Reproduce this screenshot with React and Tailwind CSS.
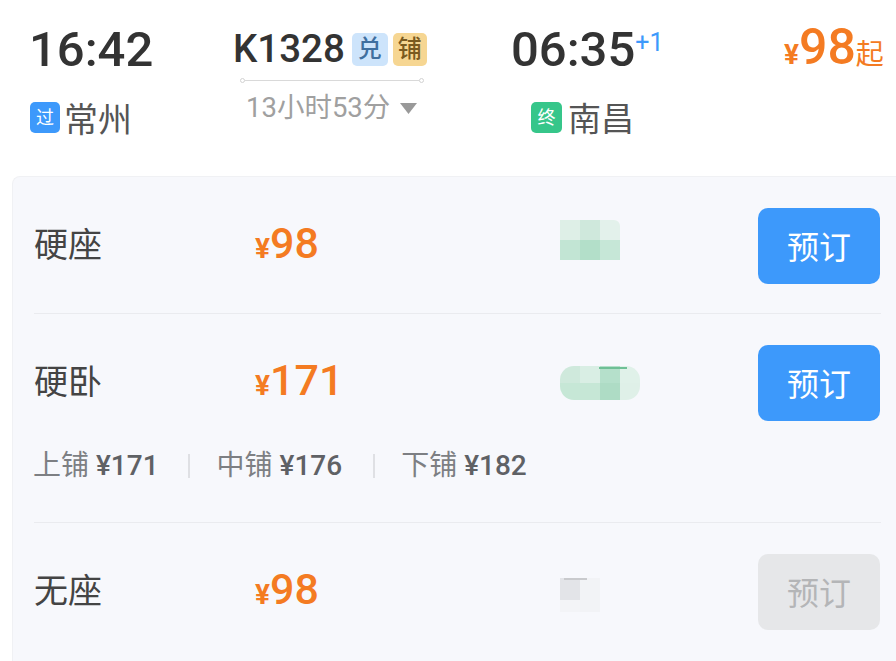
const font = { fontFamily: 'Roboto, "Noto Sans CJK SC", sans-serif' };

function Mosaic({ cells, className, line }) {
  return (
    <div className="relative w-fit">
      <div className={`grid w-fit overflow-hidden ${className}`}>
        {cells.map((c, i) => (
          <div key={i} className="h-5 w-5" style={{ background: c }} />
        ))}
      </div>
      {line}
    </div>
  );
}

function BookButton({ disabled }) {
  return (
    <button
      className={
        disabled
          ? 'mr-[1px] flex h-[76px] w-[122px] items-center justify-center rounded-[10px] bg-[#e6e7e9] pt-[3px] text-[32px] text-[#b4b5b7]'
          : 'mr-[1px] flex h-[76px] w-[122px] items-center justify-center rounded-[10px] bg-[#3d99fb] pt-[3px] text-[32px] text-white'
      }
    >
      预订
    </button>
  );
}

function Price({ value }) {
  return (
    <div className="flex w-[305px] items-baseline font-medium text-[#f47b22]">
      <span className="text-[28px] font-bold">¥</span>
      <span className="text-[43px] leading-none">{value}</span>
    </div>
  );
}

function SeatRow({ name, price, mosaic, mosaicClass, line, disabled }) {
  return (
    <div className="flex items-start">
      <div className="flex h-[76px] w-[221px] items-center pb-[3px] text-[34px] leading-none text-[#444444]">{name}</div>
      <div className="flex h-[76px] items-center">
        <Price value={price} />
      </div>
      <div className="flex-1">
        <Mosaic cells={mosaic} className={mosaicClass} line={line} />
      </div>
      <BookButton disabled={disabled} />
    </div>
  );
}

function Berth({ label, price }) {
  return (
    <span className="text-[#7d7f83]">
      {label} <span className="font-medium text-[#5f6165]">{price}</span>
    </span>
  );
}

export default function App() {
  return (
    <div className="h-[661px] w-[896px] overflow-hidden bg-white" style={font}>
      <div className="flex h-[176px] items-start">
        <div className="ml-[29px] w-[204px] pt-[22px]">
          <div className="text-[49px] font-medium leading-[56px] text-[#333333]">16:42</div>
          <div className="ml-[1px] mt-[24px] flex items-start gap-[4px]">
            <span className="flex h-[31px] w-[30px] items-center justify-center rounded-[5px] bg-[#3d99fb] text-[18px] text-white">过</span>
            <span className="mt-[-2px] text-[34px] leading-[40px] text-[#555555]">常州</span>
          </div>
        </div>

        <div className="w-[278px] pt-[28px]">
          <div className="flex items-center">
            <span className="text-[38.5px] font-medium leading-[42px] text-[#333333]">K1328</span>
            <span className="ml-[7px] flex h-[33px] w-[36px] items-center justify-center rounded-[5px] bg-[#cde4fb] text-[24px] font-medium leading-none text-[#3f6f9f]">兑</span>
            <span className="ml-[5px] flex h-[33px] w-[34px] items-center justify-center rounded-[5px] bg-[#f6d692] text-[24px] font-medium leading-none text-[#7a5a20]">铺</span>
          </div>
          <div className="ml-[7px] mt-[8px] flex w-[184px] items-center">
            <span className="h-[5px] w-[5px] rounded-full border border-[#d2d2d2]" />
            <span className="h-[1px] flex-1 bg-[#d9d9d9]" />
            <span className="h-[5px] w-[5px] rounded-full border border-[#d2d2d2]" />
          </div>
          <div className="ml-[13px] mt-[5px] flex items-center gap-[10px]">
            <span className="text-[27.5px] leading-[40px] text-[#a0a0a0]">13小时53分</span>
            <svg width="17" height="11" viewBox="0 0 17 11">
              <path d="M0 0H17L8.5 11Z" fill="#999999" />
            </svg>
          </div>
        </div>

        <div className="w-[273px] pt-[22px]">
          <div className="flex items-start">
            <span className="text-[49px] font-medium leading-[56px] text-[#333333]">06:35</span>
            <span className="mt-[6px] text-[25px] leading-[30px] text-[#3d99fb]">+1</span>
          </div>
          <div className="ml-[20px] mt-[24px] flex items-start gap-[6px]">
            <span className="flex h-[31px] w-[31px] items-center justify-center rounded-[5px] bg-[#36c68a] text-[18px] text-white">终</span>
            <span className="mt-[-2px] text-[33px] leading-[40px] text-[#555555]">南昌</span>
          </div>
        </div>

        <div className="flex items-baseline pt-[22px] text-[#f47b22]">
          <span className="text-[28px] font-bold leading-[50px]">¥</span>
          <span className="text-[50px] font-medium leading-[50px]">98</span>
          <span className="text-[28px] leading-[50px]">起</span>
        </div>
      </div>

      <div className="ml-[12px] h-[485px] rounded-tl-[8px] border-t border-l border-[#f0f1f4] bg-[#f7f8fc] pl-[21px] pr-[15px]">
        <div className="h-[137px] border-b border-[#eaebef] pt-[31px]">
          <SeatRow
            name="硬座"
            price="98"
            mosaicClass="mt-[12px] grid-cols-3 rounded-tr-[6px]"
            mosaic={['#deefe7', '#cfe8dc', '#e3f1eb', '#c2e5d4', '#b3dfc9', '#c6e7d7']}
          />
        </div>
        <div className="h-[209px] border-b border-[#eaebef] pt-[31px]">
          <SeatRow
            name="硬卧"
            price="171"
            mosaicClass="mt-[21px] grid-cols-4 rounded-[14px] [&>div]:h-[17px]"
            mosaic={['#cfe9dc', '#d9eee4', '#b5e0cb', '#e0f1e9', '#c6e7d6', '#c6e7d6', '#aedcc5', '#dff0e8']}
            line={<span className="absolute left-[39px] top-[1px] h-[2px] w-[28px] bg-[#6fc096]" />}
          />
          <div className="ml-[-1px] mt-[26px] flex items-center text-[28px] leading-[38px]">
            <Berth label="上铺" price="¥171" />
            <span className="ml-[29px] mr-[27px] h-[24px] w-[2px] bg-[#dfe0e4]" />
            <Berth label="中铺" price="¥176" />
            <span className="ml-[31px] mr-[26px] h-[24px] w-[2px] bg-[#dfe0e4]" />
            <Berth label="下铺" price="¥182" />
          </div>
        </div>
        <div className="pt-[31px]">
          <SeatRow
            name="无座"
            price="98"
            disabled
            mosaicClass="mt-[24px] h-[34px] grid-cols-2 [&>div]:h-[22px]"
            mosaic={['#e3e4e8', '#f2f3f6', '#f3f4f7', '#f2f3f6']}
            line={<span className="absolute left-[4px] top-0 h-[2px] w-[23px] bg-[#c9cacd]" />}
          />
        </div>
      </div>
    </div>
  );
}
